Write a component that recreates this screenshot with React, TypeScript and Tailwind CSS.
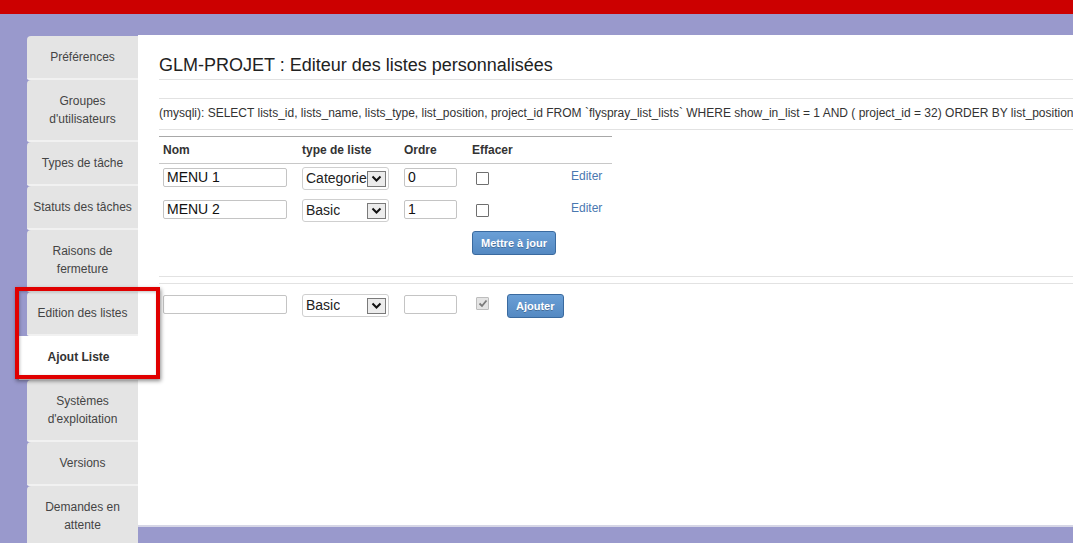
import React from "react";

const tabs = [
  { label: ["Préférences"] },
  { label: ["Groupes", "d'utilisateurs"] },
  { label: ["Types de tâche"] },
  { label: ["Statuts des tâches"] },
  { label: ["Raisons de", "fermeture"] },
  { label: ["Edition des listes"] },
  { label: ["Ajout Liste"], active: true },
  { label: ["Systèmes", "d'exploitation"] },
  { label: ["Versions"] },
  { label: ["Demandes en", "attente"] }
];

const lists = [
  { name: "MENU 1", type: "Categorie", order: "0" },
  { name: "MENU 2", type: "Basic", order: "1" }
];

function Chevron() {
  return (
    <svg width="11" height="8" viewBox="0 0 11 8" fill="none">
      <path d="M1.5 1.5 L5.5 5.5 L9.5 1.5" stroke="#111" strokeWidth="2" />
    </svg>
  );
}

function FakeSelect({ value }: { value: string }) {
  return (
    <div className="flex h-[23px] w-[87px] items-center justify-between rounded-[3px] border border-[#cfcfcf] bg-white pl-[3px] pr-[2px] text-[14px] text-[#222]">
      <span className="overflow-hidden whitespace-nowrap">{value}</span>
      <span className="flex h-[16px] w-[19px] shrink-0 items-center justify-center border border-[#7a7a7a] bg-[#ececec]">
        <Chevron />
      </span>
    </div>
  );
}

function TextBox({ value, width }: { value: string; width: string }) {
  return (
    <div
      className={`${width} h-[19px] rounded-[2px] border border-[#c4c4c4] bg-white px-[3px] text-[14px] leading-[17px] text-[#111]`}
    >
      {value}
    </div>
  );
}

function Checkbox({ checked }: { checked?: boolean }) {
  if (checked) {
    return (
      <span className="flex h-[13px] w-[13px] items-center justify-center rounded-[1px] border border-[#bdbdbd] bg-[#e4e4e4]">
        <svg width="10" height="9" viewBox="0 0 10 9" fill="none">
          <path d="M1.5 4.5 L4 7 L8.5 1.5" stroke="#7a7a7a" strokeWidth="1.8" />
        </svg>
      </span>
    );
  }
  return <span className="block h-[13px] w-[13px] rounded-[1px] border border-[#6f6f6f] bg-white" />;
}

function BlueButton({ children }: { children: React.ReactNode }) {
  return (
    <button
      type="button"
      className="h-[24px] rounded-[3px] border border-[#3a6a9f] bg-[linear-gradient(#6a9fd6,#5489c2)] px-[8px] text-[11px] font-bold text-white [text-shadow:0_1px_0_rgba(0,0,0,.25)]"
    >
      {children}
    </button>
  );
}

export default function App() {
  return (
    <div className="relative h-screen overflow-hidden bg-[#9999cc] font-['Liberation_Sans',Arial,sans-serif]">
      <div className="h-[14px] bg-[#cc0000]" />

      <div className="flex items-start pl-[27px] pt-[21px]">
        <nav className="mt-[1px] flex w-[111px] shrink-0 flex-col">
          {tabs.map((tab) => (
            <div
              key={tab.label.join(" ")}
              className={
                tab.active
                  ? "-ml-[8px] border-b-2 border-white bg-white py-[12px] text-center text-[12px] font-bold leading-[18px] text-[#333]"
                  : "rounded-tl-[4px] rounded-bl-[2px] border-b-2 border-[#f1f1f1] bg-[#e4e4e4] py-[12px] text-center text-[12px] leading-[18px] text-[#444]"
              }
            >
              {tab.label.map((line) => (
                <div key={line}>{line}</div>
              ))}
            </div>
          ))}
        </nav>

        <main className="h-[492px] min-w-0 flex-1 overflow-hidden border-b-2 border-[#d6d6e6] bg-white pl-[21px]">
          <h1 className="border-b border-[#e2e2e2] pb-[3px] pt-[19px] text-[18px] font-normal leading-[22px] text-[#222]">
            GLM-PROJET : Editeur des listes personnalisées
          </h1>

          <div className="mt-[18px] whitespace-nowrap border-y border-[#e2e2e2] pb-[9px] pt-[7px] text-[12px] leading-[14px] text-[#333]">
            (mysqli): SELECT lists_id, lists_name, lists_type, list_position, project_id FROM `flyspray_list_lists` WHERE
            show_in_list = 1 AND ( project_id = 32) ORDER BY list_position
          </div>

          <div className="mt-[6px] w-[453px] border-t border-[#a8a8a8]">
            <div className="grid h-[27px] grid-cols-[139px_102px_68px_144px] items-center border-b border-[#c8c8c8] text-[12px] font-bold text-[#333]">
              <span className="pl-[4px]">Nom</span>
              <span className="pl-[4px]">type de liste</span>
              <span className="pl-[4px]">Ordre</span>
              <span className="pl-[4px]">Effacer</span>
            </div>

            {lists.map((row) => (
              <div key={row.name} className="grid h-[32px] grid-cols-[139px_102px_68px_87px_57px] items-start">
                <div className="mt-[4px] pl-[4px]">
                  <TextBox value={row.name} width="w-[124px]" />
                </div>
                <div className="mt-[3px] pl-[4px]">
                  <FakeSelect value={row.type} />
                </div>
                <div className="mt-[4px] pl-[4px]">
                  <TextBox value={row.order} width="w-[53px]" />
                </div>
                <div className="mt-[8px] pl-[8px]">
                  <Checkbox />
                </div>
                <a className="mt-[5px] pl-[16px] text-[12px] leading-[14px] text-[#4a78b0]">Editer</a>
              </div>
            ))}

            <div className="grid h-[32px] grid-cols-[309px_144px] items-start">
              <span />
              <div className="mt-[2px] pl-[4px]">
                <BlueButton>Mettre à jour</BlueButton>
              </div>
            </div>
          </div>

          <div className="mt-[16px] border-t border-[#e2e2e2]" />
          <div className="mt-[6px] flex items-start border-t border-[#e2e2e2]">
            <div className="mt-[11px] w-[139px] pl-[4px]">
              <TextBox value="" width="w-[124px]" />
            </div>
            <div className="mt-[10px] w-[102px] pl-[4px]">
              <FakeSelect value="Basic" />
            </div>
            <div className="mt-[11px] w-[68px] pl-[4px]">
              <TextBox value="" width="w-[53px]" />
            </div>
            <div className="mt-[13px] w-[39px] pl-[8px]">
              <Checkbox checked />
            </div>
            <div className="mt-[9px]">
              <BlueButton>Ajouter</BlueButton>
            </div>
          </div>
        </main>
      </div>

      <div className="pointer-events-none absolute left-[15px] top-[287px] h-[92px] w-[145px] border-4 border-[#e00000] shadow-[1px_2px_4px_rgba(0,0,0,0.45),inset_1px_1px_3px_rgba(0,0,0,0.25)]" />
    </div>
  );
}
